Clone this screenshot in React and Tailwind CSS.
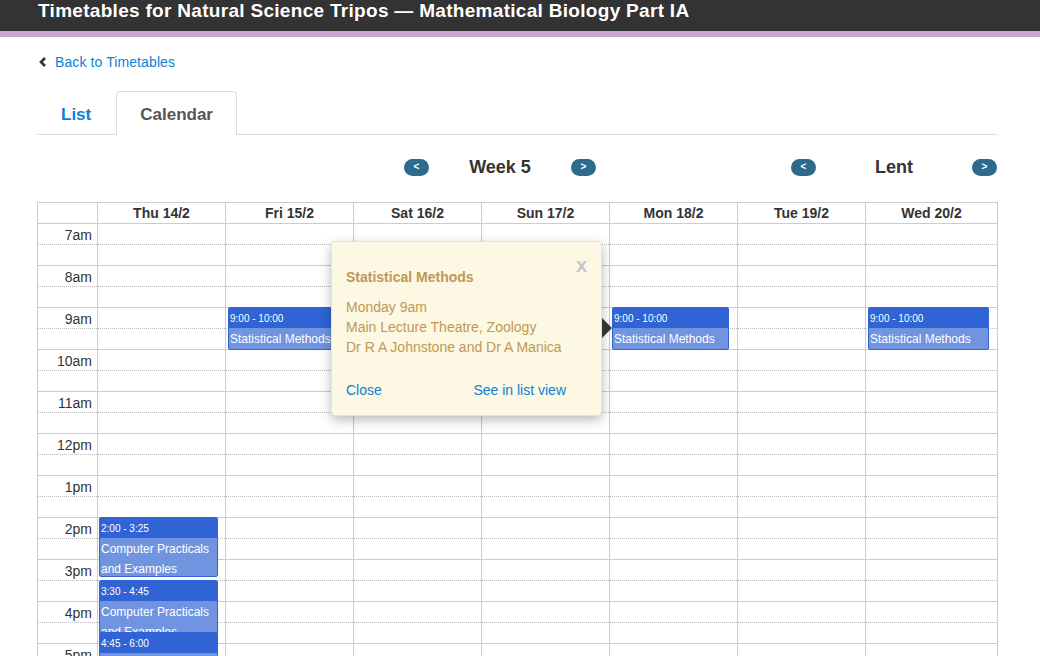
import React from "react";

const days = ["Thu 14/2", "Fri 15/2", "Sat 16/2", "Sun 17/2", "Mon 18/2", "Tue 19/2", "Wed 20/2"];
const hours = ["7am", "8am", "9am", "10am", "11am", "12pm", "1pm", "2pm", "3pm", "4pm", "5pm", "6pm"];

const events = {
  0: [
    { start: 14, startMin: 0, dur: 85, time: "2:00 - 3:25", title: "Computer Practicals and Examples" },
    { start: 15, startMin: 30, dur: 75, time: "3:30 - 4:45", title: "Computer Practicals and Examples" },
    { start: 16, startMin: 45, dur: 75, time: "4:45 - 6:00", title: "Computer Practicals and Examples" },
  ],
  1: [{ start: 9, startMin: 0, dur: 60, time: "9:00 - 10:00", title: "Statistical Methods" }],
  4: [{ start: 9, startMin: 0, dur: 60, time: "9:00 - 10:00", title: "Statistical Methods" }],
  6: [{ start: 9, startMin: 0, dur: 60, time: "9:00 - 10:00", title: "Statistical Methods" }],
};

function NavPill({ children }) {
  return (
    <span className="flex h-[17px] w-[25px] items-center justify-center rounded-full bg-[#2d6a8d] text-[10px] font-bold leading-none text-white">
      {children}
    </span>
  );
}

function HourCell({ label }) {
  return (
    <div className="h-[42px] border-b border-[#cccccc]">
      <div className="h-[21px] border-b border-dotted border-[#bbbbbb] pr-[5px] pt-[1px] text-right text-[14px] leading-[21px] text-[#333]">
        {label}
      </div>
    </div>
  );
}

function Event({ ev, first }) {
  const top = (ev.start - 7) * 42 - 1 + Math.round(ev.startMin * 0.7);
  const height = Math.round(ev.dur * 0.7) + 1;
  return (
    <div
      className={
        "absolute overflow-hidden rounded-[2px] border border-[#3064d4] bg-[#7094e0] " +
        (first ? "left-[1px] right-[7px]" : "left-[2px] right-[8px]")
      }
      style={{ top, height }}
    >
      <div className="h-[20px] bg-[#3064d4] pl-[1px] text-[10px] leading-[21px] text-white">{ev.time}</div>
      <div className="pl-[1px] pt-[1px] text-[12px] leading-[20px] text-white">{ev.title}</div>
    </div>
  );
}

export default function App() {
  return (
    <div className="h-[656px] w-[1040px] overflow-hidden bg-white" style={{ fontFamily: '"Liberation Sans", Arial, sans-serif' }}>
      <div className="h-[31px] bg-[#333333] pl-[38px] pt-[1px]">
        <div className="whitespace-nowrap text-[19px] font-bold leading-[19px] tracking-[0.3px] text-white">
          Timetables for Natural Science Tripos — Mathematical Biology Part IA
        </div>
      </div>
      <div className="h-[6px] bg-[#c6a8d2]" />

      <div className="ml-[37px] w-[961px]">
        <a className="mt-[15px] flex h-[20px] items-center text-[14px] text-[#0e7fd3]">
          <svg width="8" height="10" viewBox="0 0 8 10" className="ml-[2px] mr-[8px]">
            <path d="M6 1 L2 5 L6 9" fill="none" stroke="#333" strokeWidth="2.6" />
          </svg>
          <span className="tracking-[0.1px]">Back to Timetables</span>
        </a>

        <div className="mt-[19px] flex h-[44px] w-[960px] border-b border-[#dddddd]">
          <div className="flex h-[43px] items-center px-[24px] pt-[4px] text-[17px] font-bold text-[#0e7fd3]">List</div>
          <div className="ml-[1px] -mb-px flex h-[44px] items-center rounded-t-[4px] border border-b-0 border-[#dddddd] bg-white px-[23px] pt-[3px] text-[17px] font-bold text-[#555555]">
            Calendar
          </div>
        </div>

        <div className="mt-[21px] flex h-[22px] items-center">
          <div className="ml-[367px] flex w-[192px] items-center justify-between">
            <NavPill>&lt;</NavPill>
            <span className="text-[18px] font-bold text-[#333]">Week 5</span>
            <NavPill>&gt;</NavPill>
          </div>
          <div className="ml-[195px] flex w-[206px] items-center justify-between">
            <NavPill>&lt;</NavPill>
            <span className="text-[18px] font-bold text-[#333]">Lent</span>
            <NavPill>&gt;</NavPill>
          </div>
        </div>

        <div className="relative mt-[24px] border-l border-t border-[#cccccc]">
          <div className="grid grid-cols-[60px_repeat(6,128px)_132px]">
            <div className="h-[21px] border-b border-r border-[#cccccc]" />
            {days.map((d) => (
              <div key={d} className="h-[21px] border-b border-r border-[#cccccc] text-center text-[14px] font-bold leading-[20px] text-[#333]">
                {d}
              </div>
            ))}
          </div>
          <div className="grid grid-cols-[60px_repeat(6,128px)_132px]">
            <div className="border-r border-[#cccccc]">
              {hours.map((h) => (
                <HourCell key={h} label={h} />
              ))}
            </div>
            {days.map((d, i) => (
              <div key={d} className="relative border-r border-[#cccccc]">
                {hours.map((h) => (
                  <HourCell key={h} label="" />
                ))}
                {(events[i] || []).map((ev, k) => (
                  <Event key={k} ev={ev} first={i === 0} />
                ))}
              </div>
            ))}
          </div>

          <div className="absolute left-[293px] top-[38px] h-[175px] w-[271px] rounded-[5px] border border-[#ece4c4] bg-[#fcf8e3] px-[14px] pt-[25px] shadow-[0_4px_12px_rgba(0,0,0,0.28)]">
            <span className="absolute right-[14px] top-[12px] text-[20px] font-bold leading-[22px] text-[#c6c6c6]">x</span>
            <div className="text-[14px] font-bold leading-[20px] text-[#c09853]">Statistical Methods</div>
            <div className="mt-[10px] text-[14px] leading-[20px] text-[#c09853]">
              <div>Monday 9am</div>
              <div>Main Lecture Theatre, Zoology</div>
              <div>Dr R A Johnstone and Dr A Manica</div>
            </div>
            <div className="mt-[23px] flex justify-between pr-[21px] text-[14px] leading-[20px] text-[#0e7fd3]">
              <span>Close</span>
              <span>See in list view</span>
            </div>
            <div className="absolute right-[-11px] top-[76px] h-0 w-0 border-y-[10px] border-l-[10px] border-y-transparent border-l-[#333333]" />
          </div>
        </div>
      </div>
    </div>
  );
}
